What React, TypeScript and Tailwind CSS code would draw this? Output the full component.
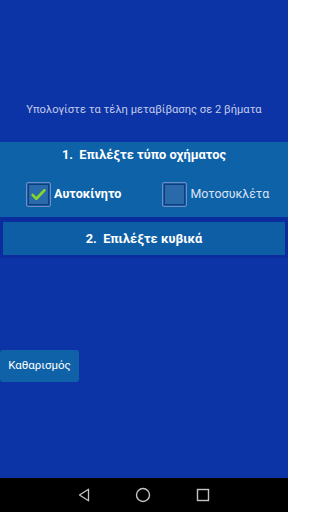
import React, { useState } from "react";

function CheckBox({ checked }: { checked: boolean }) {
  return (
    <span className="flex h-[25px] w-[25px] items-center justify-center rounded-[2px] border border-[#6f8fc4] bg-[#1d5a9e] p-[1px]">
      <span className="flex h-full w-full items-center justify-center border border-[#0c3f80] bg-[#2a6aab]">
        {checked && (
          <svg viewBox="0 0 20 20" className="h-[17px] w-[17px]">
            <path d="M3 10.5l4.5 4.5L17 5" fill="none" stroke="#86d62a" strokeWidth="3" strokeLinecap="round" strokeLinejoin="round" />
          </svg>
        )}
      </span>
    </span>
  );
}

export default function App() {
  const [vehicle, setVehicle] = useState<"car" | "moto">("car");

  return (
    <div className="flex h-[512px] w-[288px] flex-col bg-[#0c34a6] font-['Roboto',sans-serif]">
      <div className="flex flex-1 flex-col">
        <p className="mt-[102px] text-center text-[11.2px] leading-[16px] text-[#c3cbe9]">
          Υπολογίστε τα τέλη μεταβίβασης σε 2 βήματα
        </p>

        {/* Step 1 */}
        <div className="mt-[24px] h-[75px] bg-[#0d62a8]">
          <h2 className="pt-[5px] text-center text-[12.8px] font-bold leading-[16px] text-white">
            1.&nbsp; Επιλέξτε τύπο οχήματος
          </h2>
          <div className="mt-[19px] flex items-center">
            <button
              className="ml-[26px] flex items-center gap-[3px]"
              onClick={() => setVehicle("car")}
            >
              <CheckBox checked={vehicle === "car"} />
              <span className={`text-[12.6px] text-white ${vehicle === "car" ? "font-bold" : "text-[#dde3f3]"}`}>
                Αυτοκίνητο
              </span>
            </button>
            <button
              className="ml-[41px] flex items-center gap-[3px]"
              onClick={() => setVehicle("moto")}
            >
              <CheckBox checked={vehicle === "moto"} />
              <span className={`text-[12.4px] ${vehicle === "moto" ? "font-bold text-white" : "text-[#dde3f3]"}`}>
                Μοτοσυκλέτα
              </span>
            </button>
          </div>
        </div>

        {/* Step 2 */}
        <div className="bg-[#0b2c9c] px-[3px] pb-[3px] pt-[5px]">
          <div className="flex h-[33px] items-center justify-center bg-[#0e5ea6]">
            <h2 className="text-center text-[12.8px] font-bold text-white">2.&nbsp; Επιλέξτε κυβικά</h2>
          </div>
        </div>

        <div className="mt-[92px]">
          <button className="h-[32px] w-[79px] rounded-[3px] bg-[#0f62a8] text-[11.5px] text-white">
            Καθαρισμός
          </button>
        </div>
      </div>

      {/* Android nav bar */}
      <div className="flex h-[34px] items-center justify-center gap-[45px] bg-black">
        <svg viewBox="0 0 12 14" className="h-[14px] w-[12px]">
          <path d="M10.5 1.2L1.5 7l9 5.8z" fill="none" stroke="#c4c4c4" strokeWidth="1.3" strokeLinejoin="round" />
        </svg>
        <svg viewBox="0 0 16 16" className="h-[16px] w-[16px]">
          <circle cx="8" cy="8" r="6.5" fill="none" stroke="#c4c4c4" strokeWidth="1.4" />
        </svg>
        <svg viewBox="0 0 14 14" className="h-[14px] w-[14px]">
          <rect x="1.5" y="1.5" width="11" height="11" fill="none" stroke="#c4c4c4" strokeWidth="1.4" />
        </svg>
      </div>
    </div>
  );
}
